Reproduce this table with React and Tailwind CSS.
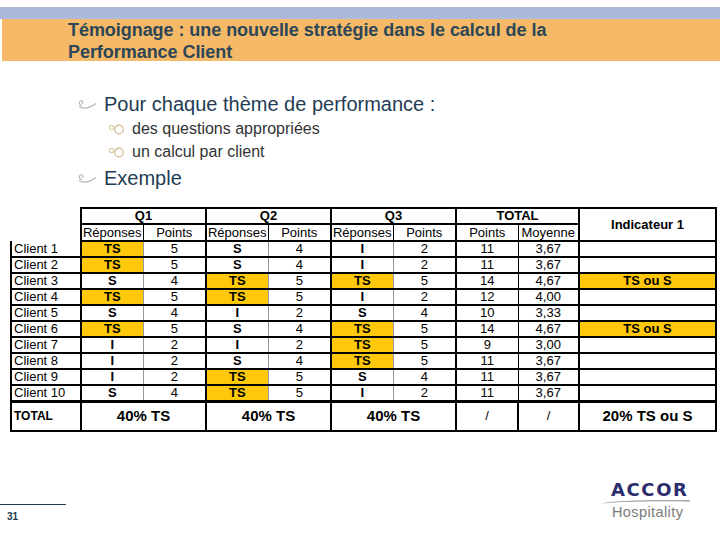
const ROWS = [
  ['Client 1', 'TS', 5, 'S', 4, 'I', 2, 11, '3,67', ''],
  ['Client 2', 'TS', 5, 'S', 4, 'I', 2, 11, '3,67', ''],
  ['Client 3', 'S', 4, 'TS', 5, 'TS', 5, 14, '4,67', 'TS ou S'],
  ['Client 4', 'TS', 5, 'TS', 5, 'I', 2, 12, '4,00', ''],
  ['Client 5', 'S', 4, 'I', 2, 'S', 4, 10, '3,33', ''],
  ['Client 6', 'TS', 5, 'S', 4, 'TS', 5, 14, '4,67', 'TS ou S'],
  ['Client 7', 'I', 2, 'I', 2, 'TS', 5, 9, '3,00', ''],
  ['Client 8', 'I', 2, 'S', 4, 'TS', 5, 11, '3,67', ''],
  ['Client 9', 'I', 2, 'TS', 5, 'S', 4, 11, '3,67', ''],
  ['Client 10', 'S', 4, 'TS', 5, 'I', 2, 11, '3,67', ''],
];

const YELLOW = 'bg-[#ffc80a]';

function Swirl() {
  return (
    <svg width="22" height="12" viewBox="0 0 22 12" className="shrink-0">
      <path d="M6 7.5 C3 7.5 2.5 4 4.5 3 C6.5 2 8 4.5 5.8 5.5" fill="none" stroke="#b9b3ad" strokeWidth="1.1" />
      <path d="M3 8.5 C7 11 13 10.5 20 5.5" fill="none" stroke="#b9b3ad" strokeWidth="1.1" />
    </svg>
  );
}

function Rings() {
  return (
    <svg width="17" height="11" viewBox="0 0 17 11" className="shrink-0">
      <circle cx="3.5" cy="3.5" r="2.2" fill="none" stroke="#d2b98c" strokeWidth="1" />
      <circle cx="11" cy="5.5" r="4.3" fill="none" stroke="#d2b98c" strokeWidth="1.2" />
    </svg>
  );
}

function DataRow({ row }) {
  const [name, r1, p1, r2, p2, r3, p3, tp, moy, ind] = row;
  const resp = (v) => `border-b-2 border-b-black border-r border-r-[#999] text-center font-bold ${v === 'TS' ? YELLOW : ''}`;
  const pts = 'border-b-2 border-b-black border-r-2 border-r-black text-center';
  return (
    <tr className="h-[16px]">
      <td className="border-2 border-black border-t-0 pl-[2px] text-left">{name}</td>
      <td className={resp(r1)}>{r1}</td>
      <td className={pts}>{p1}</td>
      <td className={resp(r2)}>{r2}</td>
      <td className={pts}>{p2}</td>
      <td className={resp(r3)}>{r3}</td>
      <td className={pts}>{p3}</td>
      <td className="border-b-2 border-b-black border-r border-r-black text-center">{tp}</td>
      <td className={pts}>{moy}</td>
      <td className={`border-b-2 border-b-black border-r-2 border-r-black text-center font-bold ${ind ? YELLOW : ''}`}>{ind}</td>
    </tr>
  );
}

export default function App() {
  return (
    <div className="relative w-[720px] h-[540px] bg-white overflow-hidden font-['Liberation_Sans',Arial,sans-serif]">
      <div className="mt-[7px] h-[12px] bg-[#adb8dd]" />
      <div className="ml-[2px] h-[42px] bg-[#f5b967] pl-[66px] text-[18px] leading-[22px] font-bold text-[#2c4658] tracking-[-0.05px]">
        <div>Témoignage : une nouvelle stratégie dans le calcul de la</div>
        <div>Performance Client</div>
      </div>

      <div className="pl-[76px] pt-[31px] text-[#1f3c55]">
        <div className="flex items-center gap-[6px] text-[20px] leading-[24px]">
          <Swirl />
          <span>Pour chaque thème de performance :</span>
        </div>
        <div className="pl-[32px] mt-[3px] flex items-center gap-[7px] text-[16px] leading-[20px] text-[#333]">
          <Rings />
          <span>des questions appropriées</span>
        </div>
        <div className="pl-[32px] mt-[3px] flex items-center gap-[7px] text-[16px] leading-[20px] text-[#333]">
          <Rings />
          <span>un calcul par client</span>
        </div>
        <div className="mt-[4px] flex items-center gap-[6px] text-[20px] leading-[24px]">
          <Swirl />
          <span>Exemple</span>
        </div>
      </div>

      <div className="pl-[10px] pt-[17px]">
        <table className="table-fixed border-collapse text-[13px] leading-[14px] text-black w-[705px]">
          <colgroup>
            <col className="w-[70px]" />
            <col className="w-[62px]" />
            <col className="w-[63px]" />
            <col className="w-[62px]" />
            <col className="w-[63px]" />
            <col className="w-[62px]" />
            <col className="w-[63px]" />
            <col className="w-[62px]" />
            <col className="w-[61px]" />
            <col className="w-[137px]" />
          </colgroup>
          <tbody>
            <tr className="h-[16px]">
              <td />
              <td colSpan={2} className="border-2 border-black text-center font-bold">Q1</td>
              <td colSpan={2} className="border-2 border-black text-center font-bold">Q2</td>
              <td colSpan={2} className="border-2 border-black text-center font-bold">Q3</td>
              <td colSpan={2} className="border-2 border-black text-center font-bold">TOTAL</td>
              <td rowSpan={2} className="border-2 border-black text-center font-bold align-top pt-[9px]">Indicateur 1</td>
            </tr>
            <tr className="h-[17px]">
              <td />
              <td className="border border-black border-l-2 border-b-2 text-center">Réponses</td>
              <td className="border border-black border-r-2 border-b-2 text-center">Points</td>
              <td className="border border-black border-l-2 border-b-2 text-center">Réponses</td>
              <td className="border border-black border-r-2 border-b-2 text-center">Points</td>
              <td className="border border-black border-l-2 border-b-2 text-center">Réponses</td>
              <td className="border border-black border-r-2 border-b-2 text-center">Points</td>
              <td className="border border-black border-l-2 border-b-2 text-center">Points</td>
              <td className="border border-black border-r-2 border-b-2 text-center">Moyenne</td>
            </tr>
            {ROWS.map((row) => (
              <DataRow key={row[0]} row={row} />
            ))}
            <tr className="h-[29px] text-[15px] font-bold">
              <td className="border-2 border-black border-t-[3px] pl-[2px] text-left text-[12px]">TOTAL</td>
              <td colSpan={2} className="border-2 border-black border-t-[3px] text-center">40% TS</td>
              <td colSpan={2} className="border-2 border-black border-t-[3px] text-center">40% TS</td>
              <td colSpan={2} className="border-2 border-black border-t-[3px] text-center">40% TS</td>
              <td className="border-2 border-black border-t-[3px] text-center font-normal text-[13px]">/</td>
              <td className="border-2 border-black border-t-[3px] text-center font-normal text-[13px]">/</td>
              <td className="border-2 border-black border-t-[3px] text-center">20% TS ou S</td>
            </tr>
          </tbody>
        </table>
      </div>

      <div className="absolute left-0 top-[504px] w-[66px] border-t border-[#1f3c4c]" />
      <div className="absolute left-[7px] top-[509px] text-[10px] font-bold text-[#1f3c4c]">31</div>

      <div className="absolute left-[598px] top-[481px] w-[95px]">
        <div className="pl-[13px] text-[18px] leading-[18px] font-bold tracking-[1.6px] text-[#2b2d6c] font-['DejaVu_Sans',sans-serif]">ACCOR</div>
        <svg width="95" height="6" viewBox="0 0 95 6" className="block">
          <path d="M0 5.5 C10 2 30 1 92 1.2 L92 2.4 C30 2.2 12 3 0 5.5 Z" fill="#8a8a8a" />
        </svg>
        <div className="pl-[14px] text-[14.5px] leading-[15px] tracking-[0.4px] text-[#7a7a7a]">Hospitality</div>
      </div>
    </div>
  );
}
